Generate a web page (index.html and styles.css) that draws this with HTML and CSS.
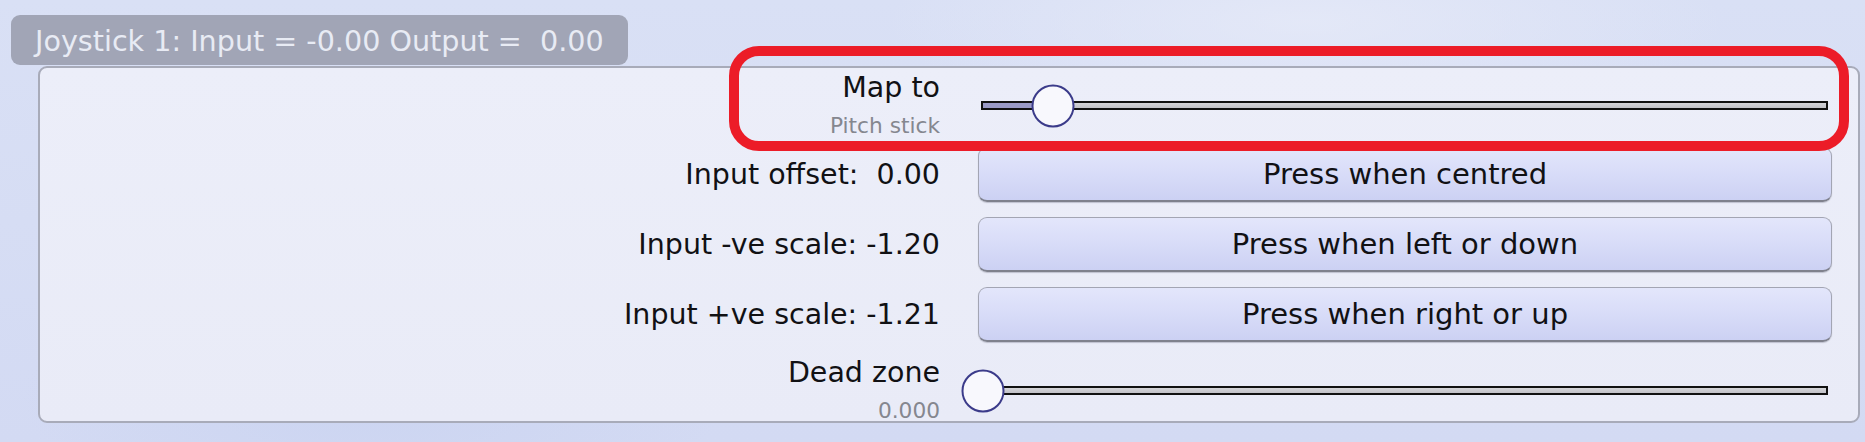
FILE: index.html
```html
<!DOCTYPE html>
<html>
<head>
<meta charset="utf-8">
<link rel="stylesheet" href="styles.css">
</head>
<body>
<div class="page">
  <div class="tab">Joystick 1: Input = -0.00 Output =  0.00</div>
  <div class="panel">
    <div class="row row-slider">
      <div class="label-block">
        <div class="label-main">Map to</div>
        <div class="label-sub">Pitch stick</div>
      </div>
      <div class="slider">
        <div class="track">
          <div class="fill" style="width:70px"></div>
          <div class="thumb" style="left:70px"></div>
        </div>
      </div>
    </div>
    <div class="row row-button">
      <div class="label">Input offset:&nbsp; 0.00</div>
      <div class="button">Press when centred</div>
    </div>
    <div class="row row-button">
      <div class="label">Input -ve scale: -1.20</div>
      <div class="button">Press when left or down</div>
    </div>
    <div class="row row-button">
      <div class="label">Input +ve scale: -1.21</div>
      <div class="button">Press when right or up</div>
    </div>
    <div class="row row-slider row-last">
      <div class="label-block">
        <div class="label-main">Dead zone</div>
        <div class="label-sub">0.000</div>
      </div>
      <div class="slider">
        <div class="track">
          <div class="fill" style="width:0px"></div>
          <div class="thumb" style="left:0px"></div>
        </div>
      </div>
    </div>
  </div>
  <div class="highlight"></div>
</div>
</body>
</html>
```
FILE: styles.css
```css
html, body {
  margin: 0;
  padding: 0;
}
body {
  width: 1865px;
  height: 442px;
  overflow: hidden;
  font-family: "DejaVu Sans", "Liberation Sans", sans-serif;
  background:
    radial-gradient(ellipse 500px 200px at 20% 90%, rgba(200,210,240,0.7), rgba(200,210,240,0) 70%),
    radial-gradient(ellipse 600px 150px at 70% 5%, rgba(230,234,248,0.8), rgba(230,234,248,0) 70%),
    linear-gradient(180deg, #d9e0f5 0%, #d3daf3 100%);
}
.page {
  position: relative;
  width: 1865px;
  height: 442px;
  padding-top: 15px;
  box-sizing: border-box;
}
.tab {
  display: inline-block;
  margin-left: 11px;
  height: 50px;
  box-sizing: border-box;
  padding: 2px 24px 0 24px;
  line-height: 48px;
  font-size: 28.6px;
  color: #e8ebf4;
  background: #a1a5b6;
  border-radius: 9px;
  white-space: pre;
  vertical-align: top;
}
.panel {
  margin-left: 38px;
  margin-top: 1px;
  width: 1822px;
  height: 357px;
  box-sizing: border-box;
  border: 2px solid #a8abb9;
  border-radius: 9px;
  background: linear-gradient(180deg, #eceef9 0%, #e9ebf7 100%);
  display: flex;
  flex-direction: column;
}
.row {
  display: grid;
  grid-template-columns: 1fr 854px;
  column-gap: 38px;
  padding-right: 26px;
  align-items: center;
}
.row-slider {
  height: 70px;
}
.row-last {
  height: 68px;
  margin-top: 11px;
}
.row-button {
  height: 55px;
  margin-top: 15px;
}
.row-slider + .row-button {
  margin-top: 9px;
}
.label-block {
  align-self: start;
  padding-top: 3px;
  text-align: right;
}
.label-main {
  font-size: 28.5px;
  line-height: 34px;
  color: #111114;
}
.label-sub {
  padding-top: 3px;
  font-size: 21.7px;
  line-height: 35px;
  color: #85878f;
}
.label {
  text-align: right;
  font-size: 28.5px;
  line-height: 55px;
  color: #111114;
}
.button {
  height: 55px;
  box-sizing: border-box;
  border: 1px solid #a3a5b3;
  border-bottom: 2px solid #7f818d;
  border-radius: 9px;
  background: linear-gradient(180deg, #e3e6fb 0%, #d8dcf8 50%, #ccd1f3 100%);
  box-shadow: 0 1px 1px rgba(60,60,80,0.25);
  text-align: center;
  font-size: 29px;
  line-height: 53px;
  color: #111114;
}
.slider {
  height: 43px;
  display: flex;
  align-items: center;
}
.track {
  position: relative;
  flex: 1;
  margin: 0 4px 0 3px;
  height: 9px;
  box-sizing: border-box;
  border: 2px solid #111;
  background: linear-gradient(180deg, #d4d4d8 0%, #c2c2c8 100%);
}
.fill {
  height: 100%;
  background: #9a9ac6;
}
.thumb {
  position: absolute;
  top: 50%;
  width: 43px;
  height: 43px;
  box-sizing: border-box;
  border: 2.5px solid #3b3b8a;
  border-radius: 50%;
  background: #f8f8fd;
  transform: translate(-50%, -50%);
}
.highlight {
  position: absolute;
  left: 729px;
  top: 46px;
  width: 1120px;
  height: 105px;
  box-sizing: border-box;
  border: 10px solid #ec1c28;
  border-radius: 30px;
}
```
